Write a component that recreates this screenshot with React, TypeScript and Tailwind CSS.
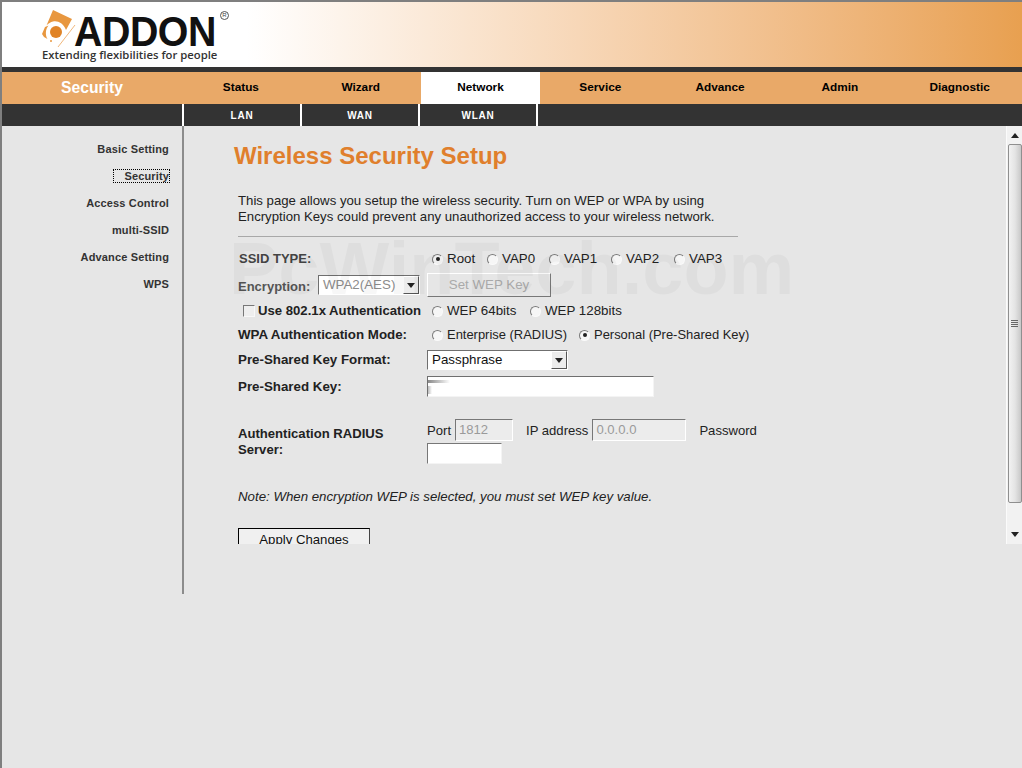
import React from "react";

const font = "font-['Liberation_Sans',Arial,sans-serif]";

function Radio({ checked }: { checked?: boolean }) {
  return (
    <span className="inline-flex shrink-0 items-center justify-center ml-[1px] w-[11px] h-[11px] rounded-full bg-[#f6f6f6] border border-t-[#7a7a7a] border-l-[#7a7a7a] border-r-[#fafafa] border-b-[#fafafa]">
      {checked && <span className="w-[4px] h-[4px] rounded-full bg-[#222]" />}
    </span>
  );
}

function Opt({ label, checked, w, size = "" }: { label: string; checked?: boolean; w: string; size?: string }) {
  return (
    <span className={`flex items-center shrink-0 whitespace-nowrap ${w}`}>
      <Radio checked={checked} />
      <span className={`ml-[4px] text-[#222] ${size}`}>{label}</span>
    </span>
  );
}

function Arrow({ up }: { up?: boolean }) {
  return (
    <svg width="8" height="5" viewBox="0 0 8 5">
      <path d={up ? "M4 0 L8 5 L0 5 Z" : "M0 0 L8 0 L4 5 Z"} fill="#222" />
    </svg>
  );
}

function SelectBox({ label, w, muted }: { label: string; w: string; muted?: boolean }) {
  return (
    <span className={`flex items-stretch h-[20px] bg-white border border-t-[#6f6f6f] border-l-[#6f6f6f] border-r-[#fff] border-b-[#fff] ${w}`}>
      <span className={`flex-1 pl-[4px] leading-[18px] ${muted ? "text-[#8c8c8c]" : "text-[#111]"}`}>{label}</span>
      <span className="w-[16px] flex items-center justify-center bg-[#ececec] border border-t-white border-l-white border-r-[#555] border-b-[#555]">
        <Arrow />
      </span>
    </span>
  );
}

const tabs = ["Status", "Wizard", "Network", "Service", "Advance", "Admin", "Diagnostic"];
const side = ["Basic Setting", "Security", "Access Control", "multi-SSID", "Advance Setting", "WPS"];

export default function App() {
  return (
    <div className={`${font} relative w-[1022px] h-[768px] overflow-hidden bg-[#e6e6e6] border-l-2 border-t-2 border-[#7f7f7f] flex flex-col`}>
      {/* header */}
      <div className="h-[65px] shrink-0 bg-gradient-to-r from-white from-[24%] to-[#e8a050] flex">
        <div className="relative w-[240px] h-[65px]">
          <svg className="absolute left-[40px] top-[8px]" width="36" height="40" viewBox="0 0 36 40">
            <path d="M11 0 L30 9 L24 20 C21 13 16 10.5 11 11.5 C8.5 12 6.5 13.5 4.5 15.5 Z" fill="#e8973f" />
            <path d="M3 17 L6.5 15.5 C3.5 19 3 25 5.5 29 L2 27 L0 24 Z" fill="#e8973f" />
            <circle cx="14" cy="22" r="6" fill="#e08428" />
            <circle cx="9" cy="31" r="1" fill="#e8973f" />
            <path d="M33 15 L16 37" stroke="#f0b77c" strokeWidth="1" />
          </svg>
          <span className="absolute left-[72px] top-[5px] text-[43px] leading-[48px] font-bold text-[#111] origin-left scale-x-[0.915] tracking-[-0.5px]">ADDON</span>
          <span className="absolute left-[218px] top-[9px] w-[9px] h-[9px] rounded-full border border-[#555] text-[6px] leading-[7px] text-center text-[#444]">R</span>
          <span className="absolute left-[40px] top-[46px] text-[11.3px] leading-[13px] font-semibold font-['Open_Sans',sans-serif] text-[#333] whitespace-nowrap">Extending flexibilities for people</span>
        </div>
      </div>
      <div className="h-[5px] shrink-0 bg-[#333333]" />
      {/* nav */}
      <div className="h-[32px] shrink-0 bg-[#e9a968] flex items-center">
        <div className="w-[179px] shrink-0 pl-[59px] pb-[1px] text-[15.7px] font-bold text-white">Security</div>
        {tabs.map((t) => (
          <div key={t} className={`w-[119.8px] h-full pb-[1px] flex items-center justify-center text-[11.8px] font-bold text-black ${t === "Network" ? "bg-white" : ""}`}>{t}</div>
        ))}
      </div>
      {/* subnav */}
      <div className="h-[22px] shrink-0 bg-[#333333] flex text-[10px] font-bold tracking-[0.8px] text-white">
        <div className="w-[182px] shrink-0 border-r-2 border-white" />
        {["LAN", "WAN", "WLAN"].map((t) => (
          <div key={t} className="w-[118px] shrink-0 flex items-center justify-center border-r-2 border-white">{t}</div>
        ))}
      </div>
      {/* body */}
      <div className="flex items-start flex-1">
        <div className="w-[182px] h-[468px] shrink-0 border-r-2 border-[#8c8c8c] flex flex-col items-end pt-[10px] pr-[13px] text-[11px] font-bold tracking-[0.15px] text-[#333]">
          {side.map((s) => (
            <div key={s} className="h-[27px] flex items-center">
              <span className={s === "Security" ? "outline-1 outline-dotted outline-black pl-[10px] leading-[12px] -translate-y-px" : ""}>{s}</span>
            </div>
          ))}
        </div>
        <div className="flex-1 h-[418px] flex overflow-hidden">
          <div className="flex-1 h-full overflow-hidden pl-[50px] pt-[16px] text-[13.33px] leading-[16px] text-[#222]">
            <h1 className="text-[24px] leading-[28px] font-bold text-[#e07f2c]">Wireless Security Setup</h1>
            <p className="ml-[4px] mt-[23px] w-[500px] text-[13.2px]">This page allows you setup the wireless security. Turn on WEP or WPA by using<br />Encryption Keys could prevent any unauthorized access to your wireless network.</p>
            <div className="ml-[4px] mt-[11px] w-[500px] h-px bg-[#a8a8a8]" />

            <div className="ml-[5px] mt-[13px] h-[18px] flex items-center text-[#444]">
              <span className="w-[192px] shrink-0 font-bold text-[13px]">SSID TYPE:</span>
              <Opt label="Root" checked w="w-[55px]" />
              <Opt label="VAP0" w="w-[62px]" />
              <Opt label="VAP1" w="w-[62px]" />
              <Opt label="VAP2" w="w-[63px]" />
              <Opt label="VAP3" w="w-[60px]" />
            </div>
            <div className="ml-[4px] mt-[5px] h-[24px] flex items-center">
              <span className="w-[80px] shrink-0 font-bold text-[13px] text-[#555] pt-[3px]">Encryption:</span>
              <SelectBox label="WPA2(AES)" w="w-[102px]" muted />
              <span className="ml-[7px] w-[124px] h-[24px] flex items-center justify-center bg-[#e6e6e6] border border-t-white border-l-white border-r-[#777] border-b-[#777] text-[#aaa]">Set WEP Key</span>
            </div>
            <div className="ml-[4px] mt-[4px] h-[20px] flex items-center">
              <span className="w-[193px] shrink-0 flex items-center font-bold text-[#222]">
                <span className="ml-[5px] mr-[3px] w-[12px] h-[12px] shrink-0 border border-t-[#777] border-l-[#777] border-r-[#f8f8f8] border-b-[#f8f8f8] bg-[#eee]" />
                <span className="whitespace-nowrap text-[13.15px]">Use 802.1x Authentication</span>
              </span>
              <Opt label="WEP 64bits" w="w-[98px]" />
              <Opt label="WEP 128bits" w="w-[100px]" />
            </div>
            <div className="ml-[4px] mt-[4px] h-[20px] flex items-center">
              <span className="w-[193px] shrink-0 font-bold whitespace-nowrap">WPA Authentication Mode:</span>
              <Opt label="Enterprise (RADIUS)" w="w-[147px]" size="text-[12.95px]" />
              <Opt label="Personal (Pre-Shared Key)" checked w="w-[180px]" size="text-[12.95px]" />
            </div>
            <div className="ml-[4px] mt-[5px] h-[20px] flex items-center">
              <span className="w-[189px] shrink-0 font-bold">Pre-Shared Key Format:</span>
              <SelectBox label="Passphrase" w="w-[141px]" />
            </div>
            <div className="ml-[4px] mt-[6px] h-[21px] flex items-center">
              <span className="w-[189px] shrink-0 font-bold">Pre-Shared Key:</span>
              <span className="relative w-[227px] h-[21px] bg-white border border-t-[#6f6f6f] border-l-[#6f6f6f] border-r-[#f4f4f4] border-b-[#f4f4f4]">
                <span className="absolute left-0 top-[3px] w-[22px] h-[3px] bg-gradient-to-r from-[#8a8a8a] to-white" />
                <span className="absolute left-0 top-[9px] w-[4px] h-[8px] bg-gradient-to-r from-[#bbb] to-white" />
              </span>
            </div>
            <div className="ml-[4px] mt-[22px] flex items-start">
              <span className="w-[189px] shrink-0 pt-[7px] font-bold leading-[16px] text-[13.1px]">Authentication RADIUS<br />Server:</span>
              <div className="w-[340px]">
                <div className="flex items-center h-[22px] whitespace-nowrap text-[13.1px]">
                  <span className="pt-[1px]">Port</span>
                  <span className="ml-[4px] w-[58px] h-[22px] pl-[3px] leading-[20px] bg-[#ececec] text-[#9a9a9a] border border-t-[#777] border-l-[#777] border-r-white border-b-white">1812</span>
                  <span className="ml-[13px] pt-[1px]">IP address</span>
                  <span className="ml-[4px] w-[94px] h-[22px] pl-[3px] leading-[20px] bg-[#ececec] text-[#9a9a9a] border border-t-[#777] border-l-[#777] border-r-white border-b-white">0.0.0.0</span>
                  <span className="ml-[13px] pt-[1px]">Password</span>
                </div>
                <div className="mt-[2px] w-[75px] h-[21px] bg-white border border-t-[#777] border-l-[#777] border-r-[#f4f4f4] border-b-[#f4f4f4]" />
              </div>
            </div>
            <p className="ml-[4px] mt-[25px] italic text-[13.27px]">Note: When encryption WEP is selected, you must set WEP key value.</p>
            <div className="ml-[4px] mt-[23px] w-[132px] h-[24px] flex items-center justify-center bg-[#f0f0f0] border border-t-black border-l-black border-r-[#444] border-b-[#444] text-[#111] text-[13.2px]">Apply Changes</div>
          </div>
          {/* scrollbar */}
          <div className="w-[16px] shrink-0 h-full bg-[#f2f2f2] border-l border-[#fbfbfb] flex flex-col items-center">
            <div className="h-[18px] flex items-center justify-center pt-[1px]"><Arrow up /></div>
            <div className="w-[14px] h-[359px] rounded-[2px] border border-[#8f8f8f] bg-gradient-to-r from-[#f2f2f2] via-[#e4e4e4] to-[#c8c8c8] flex flex-col items-center justify-center gap-px">
              <span className="w-[7px] h-px bg-[#666]" />
              <span className="w-[7px] h-px bg-[#666]" />
              <span className="w-[7px] h-px bg-[#666]" />
              <span className="w-[7px] h-px bg-[#666]" />
            </div>
            <div className="flex-1" />
            <div className="h-[19px] flex items-center justify-center"><Arrow /></div>
          </div>
        </div>
      </div>
      {/* watermark */}
      <div className="absolute left-[227px] top-[226px] text-[74px] leading-[82px] font-bold text-black/[0.03] pointer-events-none whitespace-nowrap">PcWinTech.com</div>
    </div>
  );
}
